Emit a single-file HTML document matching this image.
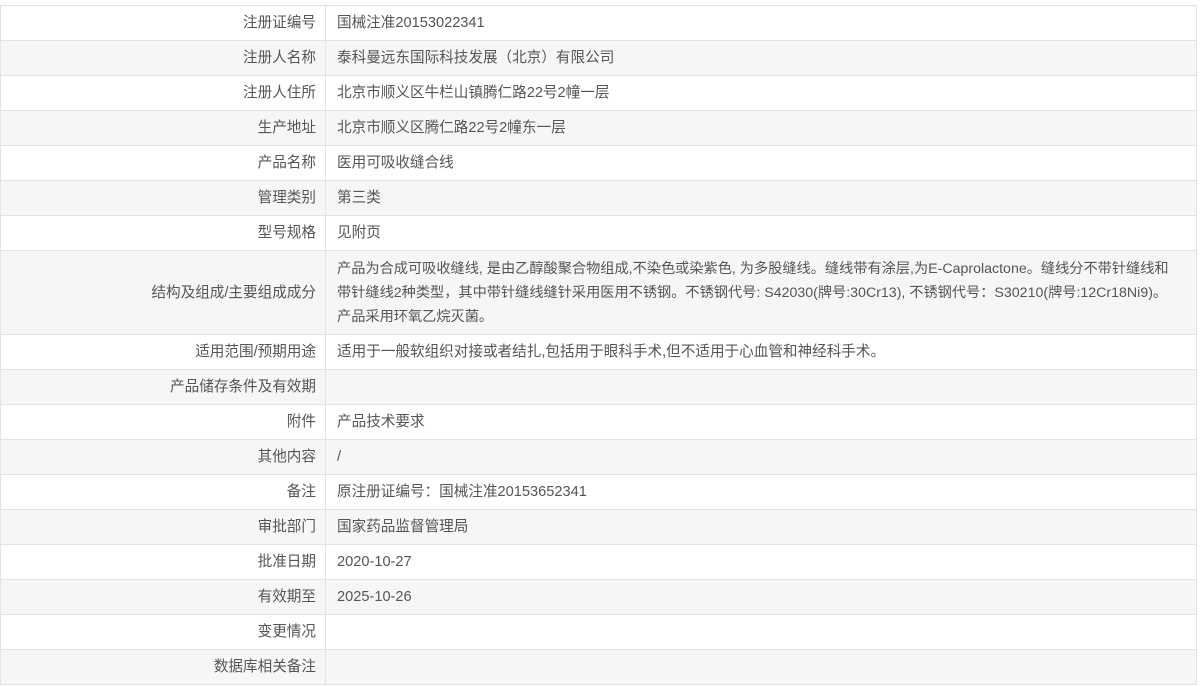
<!DOCTYPE html>
<html><head><meta charset="utf-8"><style>
html,body{margin:0;padding:0;background:#fff;width:1200px;height:686px;overflow:hidden}
table{position:absolute;left:0;top:5px;width:1197px;border-collapse:collapse;table-layout:fixed;font-family:"Liberation Sans","Noto Sans CJK SC",sans-serif;font-size:14.6px;color:#555}
td{border:1px solid #e3e3e3;height:34px;padding:0;line-height:24px;box-sizing:border-box}
tr{height:35px}
tr:nth-child(even) td{background:#f6f6f6}
td.l{width:325px;text-align:right;padding-right:9px}
td.v{padding-left:11px;padding-right:6px}
tr.t td{height:84px}
tr.t td.v{padding-top:5px;padding-bottom:5px;padding-right:0;white-space:nowrap;font-size:14.2px;overflow:hidden}
</style></head><body>
<table>
<tr><td class="l">注册证编号</td><td class="v">国械注准20153022341</td></tr>
<tr><td class="l">注册人名称</td><td class="v">泰科曼远东国际科技发展（北京）有限公司</td></tr>
<tr><td class="l">注册人住所</td><td class="v">北京市顺义区牛栏山镇腾仁路22号2幢一层</td></tr>
<tr><td class="l">生产地址</td><td class="v">北京市顺义区腾仁路22号2幢东一层</td></tr>
<tr><td class="l">产品名称</td><td class="v">医用可吸收缝合线</td></tr>
<tr><td class="l">管理类别</td><td class="v">第三类</td></tr>
<tr><td class="l">型号规格</td><td class="v">见附页</td></tr>
<tr class="t"><td class="l">结构及组成/主要组成成分</td><td class="v">产品为合成可吸收缝线, 是由乙醇酸聚合物组成,不染色或染紫色, 为多股缝线。缝线带有涂层,为E-Caprolactone。缝线分不带针缝线和<br>带针缝线2种类型，其中带针缝线缝针采用医用不锈钢。不锈钢代号: S42030(牌号:30Cr13), 不锈钢代号：S30210(牌号:12Cr18Ni9)。<br>产品采用环氧乙烷灭菌。</td></tr>
<tr><td class="l">适用范围/预期用途</td><td class="v">适用于一般软组织对接或者结扎,包括用于眼科手术,但不适用于心血管和神经科手术。</td></tr>
<tr><td class="l">产品储存条件及有效期</td><td class="v"></td></tr>
<tr><td class="l">附件</td><td class="v">产品技术要求</td></tr>
<tr><td class="l">其他内容</td><td class="v">/</td></tr>
<tr><td class="l">备注</td><td class="v">原注册证编号：国械注准20153652341</td></tr>
<tr><td class="l">审批部门</td><td class="v">国家药品监督管理局</td></tr>
<tr><td class="l">批准日期</td><td class="v">2020-10-27</td></tr>
<tr><td class="l">有效期至</td><td class="v">2025-10-26</td></tr>
<tr><td class="l">变更情况</td><td class="v"></td></tr>
<tr><td class="l">数据库相关备注</td><td class="v"></td></tr>
</table>
</body></html>
